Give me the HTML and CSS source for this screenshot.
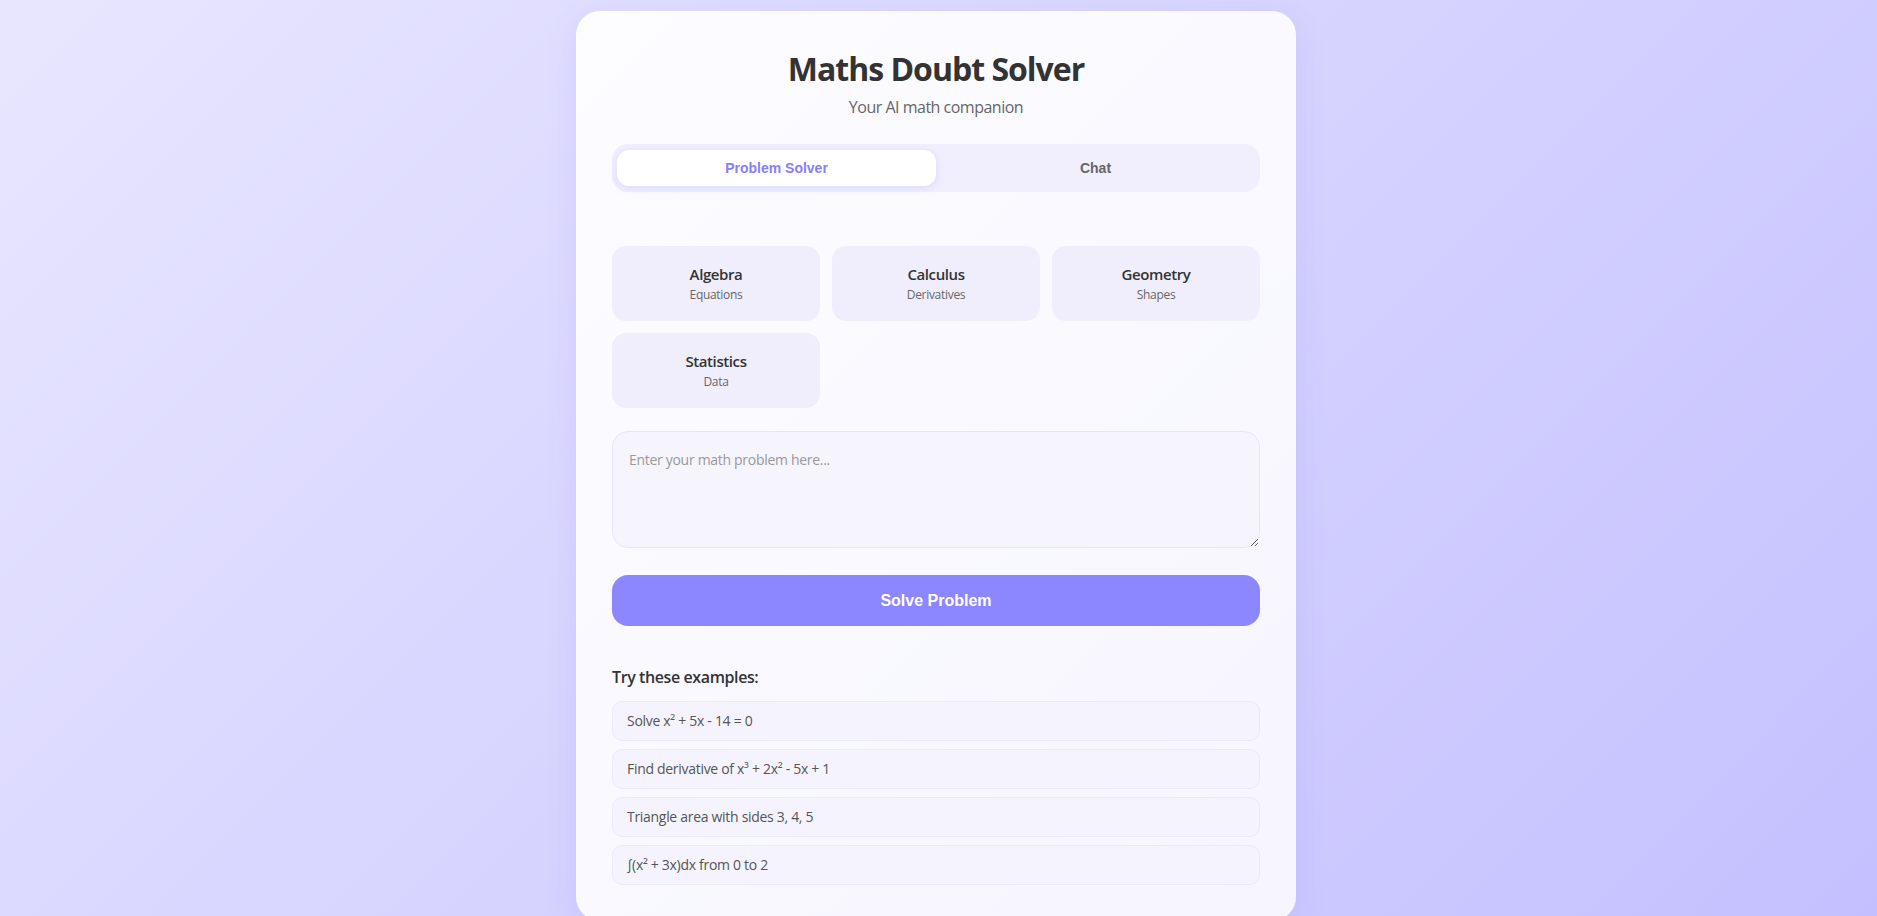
FILE: index.html
```html
<!DOCTYPE html>
<html lang="en">

<head>
    <meta charset="UTF-8">
    <meta name="viewport" content="width=device-width, initial-scale=1.0">
    <title>Maths Doubt Solver</title>
    <link rel="stylesheet" href="styles.css">
</head>

<body>
    <div class="app">
        <div class="app-header">
            <h1>Maths Doubt Solver</h1>
            <p class="subtitle">Your AI math companion</p>
        </div>

        <!-- tabs -->
        <div class="tabs">
            <button class="tab active">Problem Solver</button>
            <button class="tab">Chat</button>
        </div>

        <div class="subjects">
            <div class="subject">
                <div class="subject-name">Algebra</div>
                <div class="subject-desc">Equations</div>
            </div>
            <div class="subject">
                <div class="subject-name">Calculus</div>
                <div class="subject-desc">Derivatives</div>
            </div>
            <div class="subject">
                <div class="subject-name">Geometry</div>
                <div class="subject-desc">Shapes</div>
            </div>
            <div class="subject">
                <div class="subject-name">Statistics</div>
                <div class="subject-desc">Data</div>
            </div>
        </div>

        <textarea class="problem-input" placeholder="Enter your math problem here..."></textarea>
        <button class="solve-btn">Solve Problem</button>

        <div class="examples">
            <h3>Try these examples:</h3>
            <div class="example-list">
                <div class="example">Solve x² + 5x - 14 = 0</div>
                <div class="example">Find derivative of x³ + 2x² - 5x + 1</div>
                <div class="example">Triangle area with sides 3, 4, 5</div>
                <div class="example">∫(x² + 3x)dx from 0 to 2</div>
            </div>
        </div>
    </div>
</body>

</html>
```

FILE: styles.css
```css
* {
    box-sizing: border-box;
}

html {
    overflow: hidden;
}

body {
    margin: 0;
    padding: 11px 5px 0 0;
    min-height: 100vh;
    font-family: "Open Sans", "Noto Sans", sans-serif;
    color: #333;
    background: linear-gradient(135deg, #e8e6ff 0%, #d6d3ff 50%, #c4c0ff 100%);
}

.app {
    width: 720px;
    margin: 0 auto;
    padding: 36px 36px 36px 36px;
    background: linear-gradient(135deg, rgba(255, 255, 255, 0.92), rgba(250, 249, 255, 0.92));
    border-radius: 24px;
    box-shadow: 0 8px 32px rgba(110, 100, 230, 0.12);
}

.app-header {
    text-align: center;
}

.app-header h1 {
    margin: 0;
    font-size: 32px;
    line-height: 44px;
    font-weight: 700;
    color: #333;
    letter-spacing: -1px;
}

.subtitle {
    margin: 5px 0 0 0;
    font-size: 16px;
    line-height: 22px;
    color: #666;
    letter-spacing: -0.5px;
}

.tabs {
    display: flex;
    margin-top: 26px;
    padding: 6px 5px;
    background: #f1effe;
    border-radius: 16px;
}

.tab {
    flex: 1;
    height: 36px;
    padding-bottom: 2px;
    border: none;
    background: transparent;
    border-radius: 12px;
    font-family: "Liberation Sans", Arial, sans-serif;
    font-size: 14px;
    font-weight: 700;
    color: #666;
    cursor: pointer;
}

.tab.active {
    background: #fff;
    color: #877ef9;
    box-shadow: 0 2px 10px rgba(139, 133, 255, 0.22);
}

.subjects {
    display: grid;
    grid-template-columns: repeat(3, 1fr);
    gap: 12px;
    margin-top: 54px;
}

.subject {
    padding: 18px 12px 18px 12px;
    background: #f0eefd;
    border-radius: 14px;
    text-align: center;
    cursor: pointer;
}

.subject-name {
    font-size: 15px;
    line-height: 20px;
    font-weight: 600;
    color: #333;
    letter-spacing: -0.4px;
}

.subject-desc {
    margin-top: 3px;
    font-size: 12px;
    line-height: 16px;
    color: #666;
    letter-spacing: -0.3px;
}

.problem-input {
    display: block;
    width: 100%;
    height: 117px;
    margin-top: 23px;
    padding: 16px;
    border: 1px solid #e8e5fb;
    border-radius: 16px;
    background: #f6f5fe;
    font-family: "Open Sans", "Noto Sans", sans-serif;
    font-size: 14px;
    line-height: 24px;
    letter-spacing: -0.3px;
    color: #333;
    outline: none;
}

.problem-input::placeholder {
    color: #999;
}

.solve-btn {
    display: block;
    width: 100%;
    height: 51px;
    margin-top: 27px;
    border: none;
    border-radius: 16px;
    background: #8c86ff;
    font-family: "Liberation Sans", Arial, sans-serif;
    font-size: 16px;
    font-weight: 700;
    color: #fff;
    cursor: pointer;
}

.examples {
    margin-top: 40px;
}

.examples h3 {
    margin: 0;
    font-size: 16px;
    line-height: 22px;
    font-weight: 600;
    color: #333;
    letter-spacing: -0.4px;
}

.example-list {
    display: flex;
    flex-direction: column;
    gap: 8px;
    margin-top: 13px;
}

.example {
    padding: 9px 14px;
    background: #f5f4fe;
    border: 1px solid #ebe9fc;
    border-radius: 10px;
    font-size: 14px;
    line-height: 20px;
    color: #555;
    letter-spacing: -0.3px;
    cursor: pointer;
}
```
